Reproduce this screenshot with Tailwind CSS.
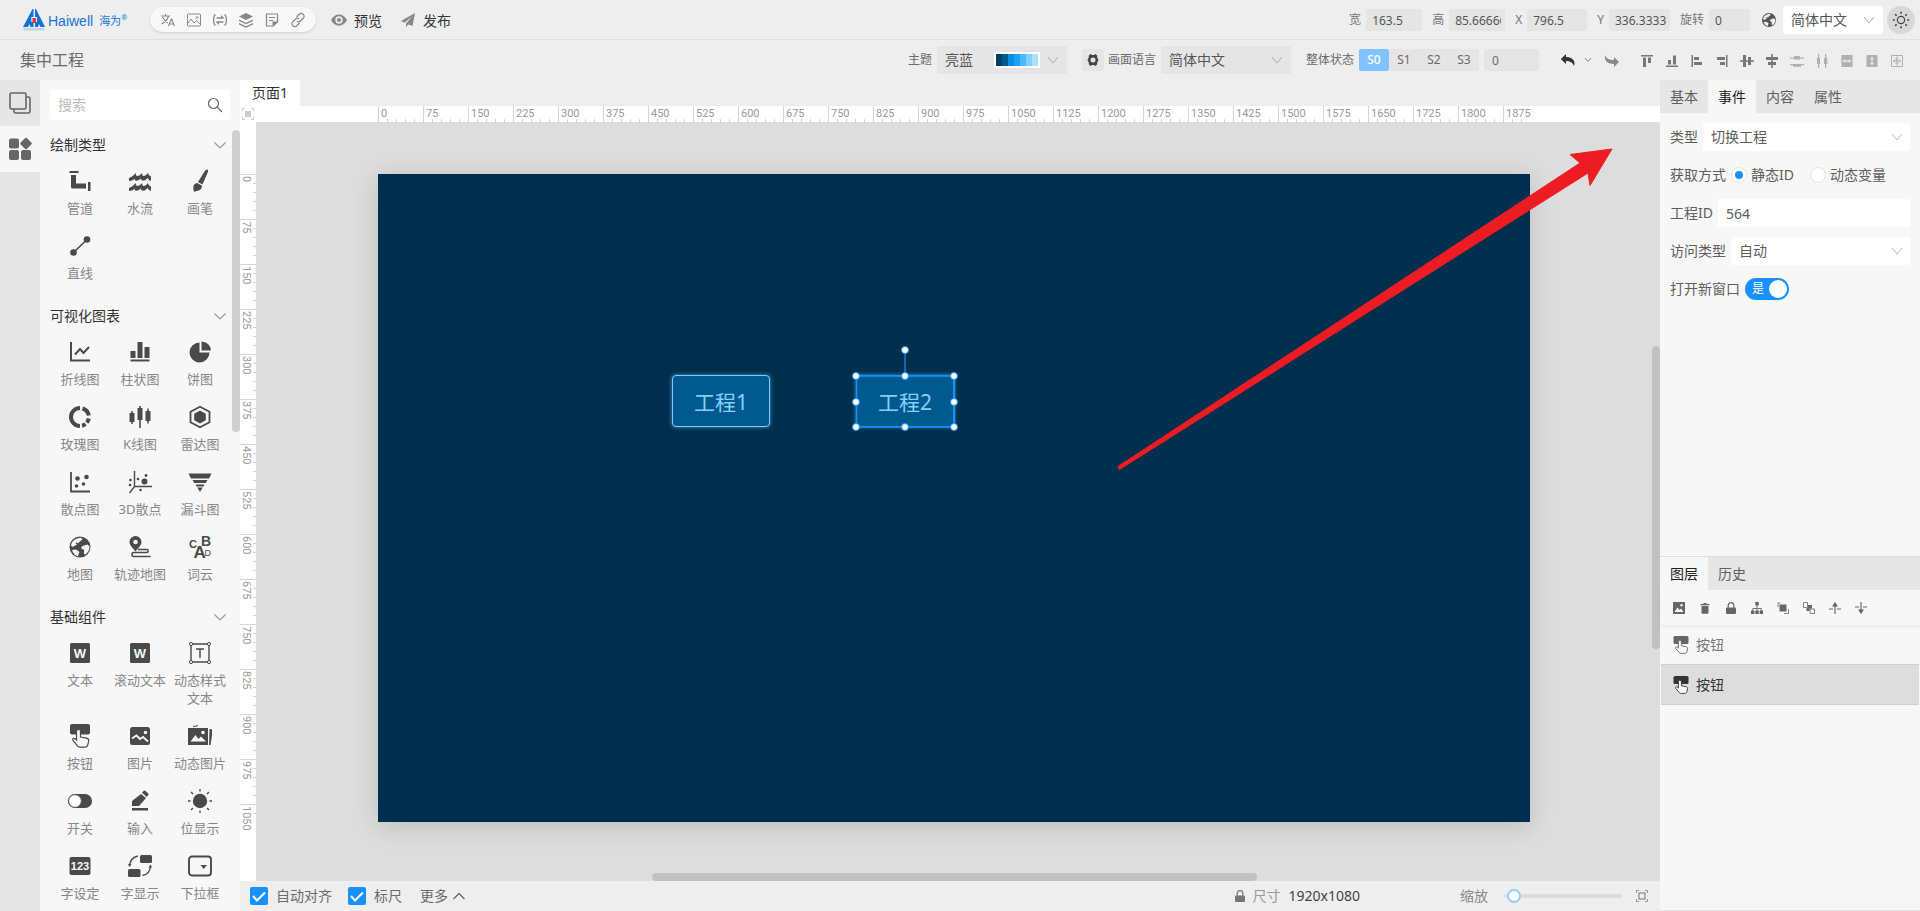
<!DOCTYPE html>
<html lang="zh-CN">
<head>
<meta charset="utf-8">
<title>集中工程 - Haiwell</title>
<script src="https://cdn.jsdelivr.net/npm/@tailwindcss/browser@4"></script>
</head>
<body class="flex h-screen flex-col overflow-hidden bg-[#eeeeee] font-['Noto_Sans','Noto_Sans_CJK_SC',sans-serif] text-sm text-[#5e5e5e]">

<!-- Icon library -->
<svg class="hidden" aria-hidden="true">
  <symbol id="chev" viewBox="0 0 12 12"><path d="M1 3l5 6 5-6" fill="none" stroke="currentColor"/></symbol>
  <symbol id="pipe" viewBox="0 0 24 24"><path fill="currentColor" d="M1.500 2h9v2h-9zM3 6h5v8.500h10v5H4.500A1.500 1.500 0 0 1 3 18zM20 13h2.500v9H20z"/></symbol>
  <symbol id="water" viewBox="0 0 24 24"><path fill="currentColor" d="M1 9C4 8 6 6 7.500 4c.5 2 .8 3 1.500 3 2 0 3.500-1 5-3 .3 2 .6 3 1.500 3 1.500 0 3-1 4.500-3 .5 2 1.500 3 3 3.500V12c-1.500-.5-2.500-1.500-3.500-3-1.500 2-3 3-5 2.500-1 0-1.500-1-1.700-2C11 11 9.500 12 8 11.700c-1-.2-1.300-1-1.500-2C5 11 3 12 1 12zM1 19c3-1 5-3 6.500-5 .5 2 .8 3 1.500 3 2 0 3.500-1 5-3 .3 2 .6 3 1.500 3 1.500 0 3-1 4.500-3 .5 2 1.500 3 3 3.500V22c-1.500-.5-2.500-1.500-3.500-3-1.500 2-3 3-5 2.500-1 0-1.500-1-1.700-2C11 21 9.500 22 8 21.700c-1-.2-1.300-1-1.500-2C5 21 3 22 1 22z"/></symbol>
  <symbol id="brush" viewBox="0 0 24 24"><path fill="currentColor" d="M20 .5c-1.500-.3-2.500.5-3.500 2L10 13l4.500 2.500L19.500 4c.6-1.500.8-2.600.5-3.500zM9.300 14c-2.600.3-4 2-4 4.500 0 2 .3 3.300 1 4.500 1-.8 2-1 3.500-1.300 2.500-.6 4-2 4.200-5z"/></symbol>
  <symbol id="line" viewBox="0 0 24 24"><path d="M5.500 18.500l13.500-13" stroke="currentColor" stroke-width="1.600"/><circle cx="5.500" cy="18.500" r="3.300" fill="currentColor"/><circle cx="19" cy="5.500" r="3.300" fill="currentColor"/></symbol>
  <symbol id="linechart" viewBox="0 0 24 24"><path d="M3 2v18.500h19" fill="none" stroke="currentColor" stroke-width="2"/><path d="M7 14.500L12 9l3.500 4L21 7" fill="none" stroke="currentColor" stroke-width="2"/></symbol>
  <symbol id="bars" viewBox="0 0 24 24"><path fill="currentColor" d="M2.500 11h5v7h-5zM9.500 2h5v16h-5zM16.500 7h5v11h-5zM2.500 19.500h19v2h-19z"/></symbol>
  <symbol id="pie" viewBox="0 0 24 24"><path fill="currentColor" d="M11.500 2.500v10h10A10 10 0 1 1 11.500 2.500zM13.500 1.500a9.500 9.500 0 0 1 9.500 9h-9.500z"/></symbol>
  <symbol id="rose" viewBox="0 0 24 24"><g fill="none" stroke="currentColor" stroke-width="4"><path d="M12 21a9 9 0 0 1 0-18"/><path d="M14.500 3.500a9 9 0 0 1 6.300 7"/><path d="M20.800 13.500a9 9 0 0 1-2 4"/><path d="M17.500 19a9 9 0 0 1-3.500 1.700"/></g></symbol>
  <symbol id="kline" viewBox="0 0 24 24"><path fill="currentColor" d="M1.500 8h1.700V6h1.600v2h1.700v9H4.800v2H3.200v-2H1.500zM9.500 3h1.700V1h1.600v2h1.700v12h-1.700v8h-1.600v-8H9.500zM17.500 6h1.700V3.500h1.600V6h1.700v10h-1.700v2.500h-1.600V16h-1.700z"/></symbol>
  <symbol id="radar" viewBox="0 0 24 24"><path d="M12 1.800l9.500 5v10.500l-9.500 5-9.500-5V6.800z" fill="none" stroke="currentColor" stroke-width="1.800"/><path d="M12 5.500l5.800 3.300v6.400L12 18.500l-5.800-3.300V8.800z" fill="currentColor"/></symbol>
  <symbol id="scatter" viewBox="0 0 24 24"><path d="M3 2v19.500h19" fill="none" stroke="currentColor" stroke-width="1.800"/><g fill="currentColor"><circle cx="9.500" cy="8.500" r="2.300"/><circle cx="18.500" cy="7" r="2.300"/><circle cx="8.500" cy="16" r="1.800"/><circle cx="15.500" cy="14" r="1.800"/></g></symbol>
  <symbol id="scatter3" viewBox="0 0 24 24"><path d="M6.500 1v15.500H24M6.500 16.500L1.500 23" fill="none" stroke="currentColor" stroke-width="1.400"/><g fill="currentColor"><circle cx="16.500" cy="11.500" r="3"/><circle cx="10" cy="9" r="1.300"/><circle cx="18" cy="5.500" r="1.400"/><circle cx="2.500" cy="10" r="1.300"/><circle cx="2" cy="15" r="1.300"/><circle cx="12.500" cy="20" r="1.300"/></g></symbol>
  <symbol id="funnel" viewBox="0 0 24 24"><path fill="currentColor" d="M.5 3.500h23l-2.500 5H3zM4.500 10h15l-1.700 3H6.200zM7.500 14.500h9l-1 2h-7zM9.300 17.500h5.400L12 22z"/></symbol>
  <symbol id="globe" viewBox="0 0 24 24"><path fill="currentColor" fill-rule="evenodd" d="M12 1.500a10.500 10.500 0 1 0 0 21 10.500 10.500 0 0 0 0-21zM10 3.200l3.300-.4 1 1.700-2 1.800-2.500 2-1.300-.8-1 1 1.500 1.200-2.500 1-1.500 1.300-2-1.500c.5-3.700 3.200-6.500 7-7.300zM16 10.500l3.500-1 2 2c.1 3.500-1.500 6.300-4.500 8.200l-1.200-1.700.5-3-3-1.500.3-2zM4 15l4-.5 3.500 2.500-1 2-.5 2.200C7.200 20.500 5 18.500 4 15z"/></symbol>
  <symbol id="track" viewBox="0 0 24 24"><path fill="currentColor" fill-rule="evenodd" d="M7.500 1A6 6 0 0 0 1.500 7c0 3.500 3.500 6 6 9.500 2.500-3.500 6-6 6-9.500a6 6 0 0 0-6-6zm0 3.700a2.300 2.300 0 1 1 0 4.600 2.300 2.300 0 0 1 0-4.600z"/><path d="M10 14.500h9c1.500 0 1.500 3 0 3H5.500c-2 0-2 4 0 4h17" fill="none" stroke="currentColor" stroke-width="1.500"/></symbol>
  <symbol id="words" viewBox="0 0 24 24"><g fill="currentColor" font-family="Liberation Sans" font-weight="bold"><text x="1" y="12.500" font-size="11">C</text><text x="13" y="11" font-size="14">B</text><text x="5.500" y="23" font-size="17">A</text><text x="16.500" y="20.500" font-size="9" font-weight="normal">D</text></g></symbol>
  <symbol id="word" viewBox="0 0 24 24"><rect x="2" y="2" width="20" height="20" rx="1.500" fill="currentColor"/><text x="12" y="16.500" font-size="13" text-anchor="middle" font-family="Liberation Sans" font-weight="bold" fill="#f7f7f7">W</text></symbol>
  <symbol id="num" viewBox="0 0 24 24"><rect x="1.500" y="3" width="21" height="18" rx="2" fill="currentColor"/><text x="12" y="16" font-size="11" text-anchor="middle" font-family="Liberation Sans" font-weight="bold" fill="#f7f7f7">123</text></symbol>
  <symbol id="tbox" viewBox="0 0 24 24"><g fill="none" stroke="currentColor" stroke-width="1.400"><path d="M3 3h18v18H3zM8 8h8M12 8v9" /></g><g fill="#f7f7f7" stroke="currentColor"><circle cx="3" cy="3" r="1.600"/><circle cx="21" cy="3" r="1.600"/><circle cx="3" cy="21" r="1.600"/><circle cx="21" cy="21" r="1.600"/></g></symbol>
  <symbol id="tap" viewBox="0 0 24 24"><rect x="2" y="0" width="20" height="10.500" rx="2" fill="currentColor"/><path d="M8.500 16V7.500a2 2 0 0 1 4 0V13l6 1.200c1.700.4 2.500 1.300 2.200 3l-1 4c-.4 1.300-1 2-2.500 2h-5c-1.500 0-2.500-.6-3.300-2L5 16.500c-1-1.800.8-2.800 2-1.800z" fill="#f7f7f7" stroke="currentColor" stroke-width="1.200"/></symbol>
  <symbol id="pic" viewBox="0 0 24 24"><rect x="2" y="3" width="20" height="18" rx="2.500" fill="currentColor"/><circle cx="17.500" cy="8.500" r="1.700" fill="#f7f7f7"/><path d="M4 14.500l4.500-3 3.500 3.500 3-2 5 4.500" fill="none" stroke="#f7f7f7" stroke-width="1.800"/></symbol>
  <symbol id="pics" viewBox="0 0 24 24"><path fill="currentColor" d="M0 4h20v17H0zM21.500 5l3.500.5L22.500 21H21z"/><path d="M5 2.500l5-.8" stroke="currentColor"/><circle cx="15" cy="8.500" r="1.800" fill="#f7f7f7"/><path d="M2.500 17.500l5-6.500 3 4 2.500-2.500 5 5z" fill="#f7f7f7"/></symbol>
  <symbol id="switch" viewBox="0 0 24 24"><rect x="0" y="5" width="24" height="14" rx="7" fill="currentColor"/><circle cx="7" cy="12" r="6.300" fill="#fff" stroke="currentColor" stroke-width=".7"/></symbol>
  <symbol id="pen" viewBox="0 0 24 24"><path fill="currentColor" d="M13 5l5 4-7 8H4v-5zM14 3.800L15.500 2c.7-.6 1.300-.6 2 0l2.500 2.200c.7.600.7 1.200.1 2L18.800 8zM4 19h16v2.500H4z"/></symbol>
  <symbol id="lamp" viewBox="0 0 24 24"><circle cx="12" cy="12" r="7.200" fill="currentColor"/><path stroke="currentColor" stroke-width="1.300" d="M12-.5v3M12 21.500v3M-.5 12h3M21.500 12h3M3 3l2 2M19 19l2 2M21 3l-2 2M5 19l-2 2"/></symbol>
  <symbol id="swap" viewBox="0 0 24 24"><rect x="12" y="1" width="12" height="8" rx="1.500" fill="currentColor"/><rect x="0" y="15" width="12.500" height="8" rx="1.500" fill="currentColor"/><path d="M10 2C5 3 2 6 1.500 12M14.500 21.500c5-.8 7.500-4 8-9" fill="none" stroke="currentColor" stroke-width="1.400"/><path d="M0 10h3.500l-2 3zM20.500 13.500l2-3 1.500 3z" fill="currentColor"/></symbol>
  <symbol id="drop" viewBox="0 0 24 24"><rect x="1" y="2.500" width="22" height="19" rx="3" fill="none" stroke="currentColor" stroke-width="1.900"/><path d="M12.500 11h6.500L15.700 15z" fill="currentColor"/></symbol>
  <symbol id="lock" viewBox="0 0 12 12"><path d="M3.200 6V3.500a2.800 2.800 0 0 1 5.600 0V6" fill="none" stroke="currentColor" stroke-width="1.200"/><rect x="1" y="5.500" width="10" height="6.500" rx="1" fill="currentColor"/></symbol>
  <symbol id="fit" viewBox="0 0 12 12"><path d="M0.500 3V.5H3M9 .5h2.500V3M11.500 9v2.500H9M3 11.500H.5V9" fill="none" stroke="currentColor"/><rect x="3" y="3" width="6" height="6" fill="none" stroke="currentColor" stroke-width="1.400"/></symbol>
</svg>

<!-- Main header -->
<header class="flex h-10 shrink-0 items-center border-b border-[#e0e0e0] pl-[22px] pr-[5px]">
  <a href="#" class="flex w-32 items-center text-[#1574d4]" aria-label="Haiwell 海为">
    <svg class="h-6 w-6" viewBox="0 0 24 24"><path fill="#0f74d8" d="M10.500 1h1v8H9.300v5h2.200v5H8.500l-1-3-1.500 3H1zM13 1h1l9 18h-4.500L17 16l-1 3h-3v-5h2V9h-2z"/><path fill="#e8333b" d="M10.500 10h3.500v5h-3.500z"/><path fill="#0f74d8" opacity=".2" d="M1 20h22l-1 2.500H2z"/></svg>
    <span class="ml-0.5 pt-0.5 font-['Liberation_Sans'] text-sm leading-5">Haiwell</span>
    <span class="ml-1.5 pt-0.5 text-[11px]">海为</span><span class="mb-1 text-[7px]">®</span>
  </a>
  <nav class="flex h-[25px] items-center gap-2.5 rounded-full bg-[#f8f8f8] px-2.5 text-[#888888] shadow-sm">
    <button class="h-4 w-4" aria-label="翻译"><svg viewBox="0 0 16 16"><path d="M1 4h9M5.500 2v2M8.500 4C7.500 8 4.500 10.500 1.500 12M2.500 5C4 8 6 10 8 11M8.500 14l2.800-7h.4l2.800 7M9.500 12h4" fill="none" stroke="currentColor" stroke-width="1.100"/></svg></button>
    <button class="h-4 w-4" aria-label="图片"><svg viewBox="0 0 16 16"><rect x="1.500" y="2" width="13" height="12" rx="1" fill="none" stroke="currentColor"/><path d="M2 11l3-4 3 4 2.500-2.500L14 12" fill="none" stroke="currentColor"/><circle cx="11" cy="5.500" r="1" fill="none" stroke="currentColor" stroke-width=".8"/></svg></button>
    <button class="h-4 w-4" aria-label="变量"><svg viewBox="0 0 16 16"><path d="M3.500 2.500C1 4 1 12 3.500 13.500M12.500 2.500C15 4 15 12 12.500 13.500M4.500 6h7M4.500 10h7" fill="none" stroke="currentColor" stroke-width="1.300"/><path fill="currentColor" d="M9 3L12 6H9zM7 13L4 10h3z"/></svg></button>
    <button class="h-4 w-4" aria-label="图层"><svg viewBox="0 0 16 16"><path fill="currentColor" d="M8 1l7 3.500L8 8 1 4.500zM1 7.500l7 3.300 7-3.300V9l-7 3.300L1 9zM1 11l7 3.200 7-3.200v1.500L8 15.700l-7-3.200z"/></svg></button>
    <button class="h-4 w-4" aria-label="记录"><svg viewBox="0 0 16 16"><path d="M2.500 2h11v8l-4 4h-7zM5 5.500h6M5 8.500h4" fill="none" stroke="currentColor" stroke-width="1.200"/><path fill="currentColor" d="M8.500 14.500V9.500h5.500z"/></svg></button>
    <button class="h-4 w-4" aria-label="链接"><svg viewBox="0 0 16 16"><g fill="none" stroke="currentColor" stroke-width="1.200"><path d="M6.500 5l3-3c2.500-2 6 1.500 4 4l-3 3c-1 1-2.500 1-3.500 0"/><path d="M9.500 11l-3 3c-2.500 2-6-1.500-4-4l3-3c1-1 2.500-1 3.500 0"/></g></svg></button>
  </nav>
  <button class="ml-[15px] flex items-center gap-[7px] text-[#333333]"><svg class="h-4 w-4 text-[#888888]" viewBox="0 0 16 16"><path fill="currentColor" fill-rule="evenodd" d="M0 8c3.500-7.500 12.500-7.500 16 0-3.500 7.500-12.500 7.500-16 0zm8-3.700a3.700 3.700 0 1 0 0 7.400 3.700 3.700 0 0 0 0-7.400z"/><circle cx="8" cy="8" r="2" fill="currentColor"/></svg><span class="pt-0.5">预览</span></button>
  <button class="ml-[18px] flex items-center gap-[7px] text-[#333333]"><svg class="h-4 w-4 text-[#888888]" viewBox="0 0 16 16"><path fill="currentColor" d="M15 1L1 9l3.500 1.700L12 4.500 6 11.500V15l2.200-2.500L12.500 14z"/></svg><span class="pt-0.5">发布</span></button>

  <form class="ml-auto flex items-center gap-2.5 pt-px text-xs text-[#777777]">
    <label class="flex items-center gap-[5px]">宽<input class="h-[22px] w-14 rounded-xs bg-[#e5e5e5] px-1.5 text-[#555555]" value="163.5"></label>
    <label class="flex items-center gap-[5px]">高<input class="h-[22px] w-14 rounded-xs bg-[#e5e5e5] pr-1 pl-1.5 text-[#555555]" value="85.66666"></label>
    <label class="flex items-center gap-[5px]">X<input class="h-[22px] w-[60px] rounded-xs bg-[#e5e5e5] px-1.5 text-[#555555]" value="796.5"></label>
    <label class="flex items-center gap-[5px]">Y<input class="h-[22px] w-[61px] rounded-xs bg-[#e5e5e5] pr-0.5 pl-1.5 text-[#555555]" value="336.3333"></label>
    <label class="flex items-center gap-[5px]">旋转<input class="h-[22px] w-[41px] rounded-xs bg-[#e5e5e5] px-1.5 text-[#555555]" value="0"></label>
  </form>
  <svg class="ml-[11px] h-4 w-4 text-[#555555]"><use href="#globe"/></svg>
  <div class="relative ml-1.5 w-[100px]">
    <select aria-label="语言" class="h-7 w-full appearance-none rounded-xs bg-white pl-2 text-sm text-[#555555]"><option>简体中文</option></select>
    <svg class="pointer-events-none absolute right-2 top-2 h-3 w-3 text-[#aaaaaa]"><use href="#chev"/></svg>
  </div>
  <button class="ml-1 flex h-7 w-7 items-center justify-center rounded-full bg-[#d8d8d8] text-[#444444]" aria-label="主题模式"><svg class="h-[18px] w-[18px]" viewBox="0 0 18 18"><g fill="none" stroke="currentColor" stroke-width="1.200"><circle cx="9" cy="9" r="3.600"/><path stroke-width="1.600" d="M9 .8v2M9 15.200v2M.8 9h2M15.200 9h2M3.200 3.200l1.400 1.400M13.400 13.400l1.400 1.400M14.800 3.200l-1.400 1.400M4.600 13.400l-1.400 1.400"/></g></svg></button>
</header>

<!-- Project toolbar -->
<div class="flex h-10 shrink-0 items-center pl-5 pr-4 text-xs text-[#6a6a6a]">
  <h1 class="text-base">集中工程</h1>
  <label for="theme" class="ml-auto">主题</label>
  <div class="relative ml-[5px] w-[130px]">
    <select id="theme" class="h-7 w-full appearance-none rounded-xs bg-[#e5e5e5] pl-2 text-sm text-[#555555]"><option>亮蓝</option></select>
    <span class="pointer-events-none absolute right-[27px] top-1.5 flex h-4 border-2 border-white">
      <i class="w-1.5 bg-[#003f6b]"></i><i class="w-1.5 bg-[#005a91]"></i><i class="w-1.5 bg-[#0a8fe0]"></i><i class="w-1.5 bg-[#1ba3f5]"></i><i class="w-1.5 bg-[#4cb7fa]"></i><i class="w-1.5 bg-[#80cfff]"></i><i class="w-1.5 bg-[#ade2ff]"></i>
    </span>
    <svg class="pointer-events-none absolute right-2 top-2 h-3 w-3 text-[#aaaaaa]"><use href="#chev"/></svg>
  </div>
  <button class="ml-[15px] flex h-[22px] w-[22px] items-center justify-center rounded-xs bg-[#e5e5e5] text-[#444444]" aria-label="语言设置"><svg class="h-3 w-3" viewBox="0 0 12 12"><path fill="currentColor" fill-rule="evenodd" d="M3.500 0l1.500 1h2l1.500-1 1.700 1.500v2l1.300 2.500-1.300 2.500v1.700L8.500 12 7 11H5l-1.500 1-1.700-1.800V8.500L.5 6l1.300-2.500v-2zM6 3.500a2.500 2.500 0 1 0 0 5 2.500 2.500 0 0 0 0-5z"/></svg></button>
  <label for="lang" class="ml-1">画面语言</label>
  <div class="relative ml-[5px] w-[130px]">
    <select id="lang" class="h-7 w-full appearance-none rounded-xs bg-[#e5e5e5] pl-2 text-sm text-[#555555]"><option>简体中文</option></select>
    <svg class="pointer-events-none absolute right-2 top-2 h-3 w-3 text-[#aaaaaa]"><use href="#chev"/></svg>
  </div>
  <label for="state" class="ml-[15px]">整体状态</label>
  <div class="ml-[5px] flex h-[22px] rounded-xs bg-[#e5e5e5]">
    <button class="w-[30px] rounded-xs bg-[#7fc2ff] font-medium text-white">S0</button>
    <button class="w-[30px]">S1</button>
    <button class="w-[30px]">S2</button>
    <button class="w-[30px]">S3</button>
  </div>
  <input id="state" class="ml-[5px] h-[22px] w-[55px] rounded-xs bg-[#e5e5e5] px-2" value="0">
  <button class="ml-[21px] h-4 w-4 text-[#333333]" aria-label="撤销"><svg viewBox="0 0 16 16"><path fill="currentColor" d="M6 2v3c5 0 8.500 2.500 8.500 6.500 0 1-.2 1.800-.6 2.500C13 10.800 10 9 6 9v3L.8 7z"/></svg></button>
  <button class="ml-2 h-2 w-2 text-[#888888]" aria-label="撤销历史"><svg viewBox="0 0 8 8"><path d="M1 2l3 3.500L7 2" fill="none" stroke="currentColor"/></svg></button>
  <button class="ml-3 h-4 w-4 text-[#888888]" aria-label="重做"><svg viewBox="0 0 16 16"><path fill="currentColor" d="M1 3c1.200 3.200 3.500 5 9 5V5l5 5-5 5v-3C4 12 0 9 1 3z"/></svg></button>
  <div class="ml-5 flex gap-[11px] pt-0.5 text-[#777777]">
    <button class="h-3.5 w-3.5" aria-label="顶对齐"><svg viewBox="0 0 14 14"><path fill="currentColor" d="M1 1h12v1.500H1zM3 3.500h3V13H3zM8 3.500h3V9H8z"/></svg></button>
    <button class="h-3.5 w-3.5" aria-label="底对齐"><svg viewBox="0 0 14 14"><path fill="currentColor" d="M1 11.500h12V13H1zM3 6h3v4.500H3zM8 1.500h3v9H8z"/></svg></button>
    <button class="h-3.5 w-3.5" aria-label="左对齐"><svg viewBox="0 0 14 14"><path fill="currentColor" d="M1.500 1H3v12H1.500zM4 3h5v3H4zM4 8h8v3H4z"/></svg></button>
    <button class="h-3.5 w-3.5" aria-label="右对齐"><svg viewBox="0 0 14 14"><path fill="currentColor" d="M11 1h1.500v12H11zM2 3h8v3H2zM5 8h5v3H5z"/></svg></button>
    <button class="h-3.5 w-3.5" aria-label="垂直居中"><svg viewBox="0 0 14 14"><path fill="currentColor" d="M0 6.200h14v1.600H0zM3 1h3v12H3zM8 3h3v8H8z"/></svg></button>
    <button class="h-3.5 w-3.5" aria-label="水平居中"><svg viewBox="0 0 14 14"><path fill="currentColor" d="M6.200 0h1.600v14H6.200zM1 3h12v3H1zM3 8h8v3H3z"/></svg></button>
    <button class="h-3.5 w-3.5 text-[#b0b0b0]" aria-label="垂直分布"><svg viewBox="0 0 14 14"><path fill="currentColor" d="M0 3.500h4V2h6v1.500h4v1.300h-4v.7H4v-.7H0zM0 10h14v1.300h-3v1.500H3v-1.500H0z"/></svg></button>
    <button class="h-3.5 w-3.5 text-[#b0b0b0]" aria-label="水平分布"><svg viewBox="0 0 14 14"><path fill="currentColor" d="M3 0h1.300v14H3zM2 4h3v6H2zM10 0h1.300v14H10zM9 4h3.300v6H9z"/></svg></button>
    <button class="h-3.5 w-3.5 text-[#b0b0b0]" aria-label="等宽"><svg viewBox="0 0 14 14"><path fill="currentColor" d="M1.500 1h11v12h-11z"/><path d="M3.500 7h7M5 5.500L3.500 7 5 8.500M9 5.500L10.500 7 9 8.500" fill="none" stroke="#fff"/></svg></button>
    <button class="h-3.5 w-3.5 text-[#b0b0b0]" aria-label="等高"><svg viewBox="0 0 14 14"><path fill="currentColor" d="M1.500 1h11v12h-11z"/><path d="M7 3.500v7M5.500 5L7 3.500 8.500 5M5.500 9L7 10.500 8.500 9" fill="none" stroke="#fff"/></svg></button>
    <button class="h-3.5 w-3.5 text-[#b0b0b0]" aria-label="等尺寸"><svg viewBox="0 0 14 14"><path d="M1.500 1.500h11v11h-11zM7 2.500v9M3 7h8M5.500 4L7 5.500 8.500 4M5.500 10L7 8.500 8.500 10M4 5.500L5 7 4 8.500M10 5.500L9 7l1 1.500" fill="none" stroke="currentColor"/></svg></button>
  </div>
</div>

<main class="flex min-h-0 flex-1">
  <!-- Side tabs -->
  <nav class="flex w-10 shrink-0 flex-col bg-[#e6e6e6] text-[#666666]">
    <button class="flex h-[46px] items-center justify-center" aria-label="页面"><svg class="h-6 w-6" viewBox="0 0 24 24"><g fill="none" stroke="currentColor" stroke-width="1.600"><rect x="2" y="2" width="16" height="16" rx="1.500"/><path d="M18 6h2.500a1.500 1.500 0 0 1 1.500 1.500v13a1.500 1.500 0 0 1-1.500 1.500h-13A1.500 1.500 0 0 1 6 20.500V18"/></g></svg></button>
    <button class="flex h-[46px] items-center justify-center bg-[#f7f7f7]" aria-label="组件"><svg class="h-6 w-6" viewBox="0 0 24 24"><g fill="currentColor"><rect x="1" y="1.500" width="10" height="10" rx="2"/><rect x="1" y="13" width="10" height="10" rx="2"/><rect x="13" y="13" width="10" height="10" rx="2"/><rect x="13.500" y="2" width="9" height="9" rx="1.500" transform="rotate(45 18 6.500)"/></g></svg></button>
  </nav>

  <!-- Component library -->
  <aside class="flex w-[200px] shrink-0 flex-col overflow-hidden bg-[#f7f7f7] pt-2.5">
    <label class="mx-2.5 flex h-[30px] shrink-0 items-center rounded-xs bg-white pr-[7px] pl-2">
      <input class="min-w-0 flex-1 placeholder-[#bbbbbb] outline-none" placeholder="搜索">
      <svg class="h-4 w-4 text-[#666666]" viewBox="0 0 16 16"><g fill="none" stroke="currentColor" stroke-width="1.200"><circle cx="6.500" cy="6.500" r="5"/><path d="M10.200 10.200L15 15"/></g></svg>
    </label>
    <div class="mt-[5px] flex min-h-0 flex-1">
      <div id="library" class="min-w-0 flex-1 overflow-hidden pl-2.5"></div>
      <div class="mt-[5px] h-[302px] w-2 shrink-0 rounded-full bg-[#cfcfcf]"></div>
    </div>
  </aside>

  <!-- Editor -->
  <section class="flex min-w-0 flex-1 flex-col">
    <div class="flex h-[26px] shrink-0"><button class="w-[60px] rounded-t-xs bg-white text-[#333333]">页面1</button></div>
    <div class="flex h-4 shrink-0 bg-white pr-2">
      <button class="flex w-4 items-center justify-center text-[#cccccc]" aria-label="适应画布"><svg class="h-3 w-3" viewBox="0 0 12 12"><path d="M.5 3V.5H3M9 .5h2.500V3M11.500 9v2.500H9M3 11.500H.5V9" fill="none" stroke="currentColor"/><path d="M3 3h6v6H3z" fill="currentColor"/></svg></button>
      <div class="flex min-w-0 flex-1 justify-center"><div id="hruler" class="flex w-[1152px] shrink-0 font-[Roboto,'Liberation_Sans',sans-serif] text-[11px] leading-[14px] text-[#999999]"></div></div>
    </div>
    <div class="flex min-h-0 flex-1 bg-[#dddddd]">
      <div class="w-4 shrink-0 overflow-hidden bg-white pt-[52px]"><div id="vruler" class="flex h-[648px] w-4 flex-col font-[Roboto,'Liberation_Sans',sans-serif] text-[11px] leading-[14px] text-[#999999]"></div></div>
      <div class="flex min-w-0 flex-1 flex-col">
        <div class="flex min-h-0 flex-1 justify-center pt-[52px]">
          <div class="relative h-[648px] w-[1152px] shrink-0 bg-[#002f4d] shadow-[0_4px_24px_rgba(0,0,0,0.15)]">
            <button class="absolute left-[294px] top-[201px] h-[52px] w-[98px] rounded-sm border border-[#7fcbfa] bg-[#005a8f] pt-0.5 text-[21px] text-[#84cffb] shadow-[0_0_4px_#3f97cc]">工程1</button>
            <button class="absolute left-[478px] top-[201px] h-[52px] w-[98px] border border-[#1890ff] bg-[#005a8f] pt-0.5 text-[21px] text-[#84cffb] shadow-[0_0_4px_#3f97cc]">工程2</button>
            <svg class="pointer-events-none absolute inset-0 h-full w-full overflow-visible" viewBox="0 0 1152 648">
              <path d="M527 176v26" stroke="#0a6bb5" stroke-width="2"/>
              <path d="M478.500 202h98v51h-98z" fill="none" stroke="#1094f5" stroke-width="1.500"/>
              <g fill="#fff" stroke="#1890ff"><circle cx="527" cy="176" r="3.500"/><circle cx="478" cy="202" r="3.500"/><circle cx="527" cy="202" r="3.500"/><circle cx="576" cy="202" r="3.500"/><circle cx="478" cy="228" r="3.500"/><circle cx="576" cy="228" r="3.500"/><circle cx="478" cy="253" r="3.500"/><circle cx="527" cy="253" r="3.500"/><circle cx="576" cy="253" r="3.500"/></g>
              <path d="M740 292.500L1202-11l-10-8.500 42-5.500-22 36.500-2-12.500L741.500 295.500z" fill="#ed1c24" stroke="#ed1c24" stroke-linejoin="round"/>
            </svg>
          </div>
        </div>
        <div class="relative h-2 shrink-0"><div class="absolute left-[396px] h-2 w-[605px] rounded-full bg-[#c1c1c1]"></div></div>
      </div>
      <div class="w-2 shrink-0 pt-56"><div class="h-[303px] w-2 rounded-full bg-[#c1c1c1]"></div></div>
    </div>
    <footer class="flex h-[30px] shrink-0 items-center bg-[#eeeeee] pl-2.5 pr-3 text-[#6a6a6a]">
      <label class="flex items-center gap-2"><span class="grid h-[18px] w-[18px]"><input type="checkbox" checked class="col-start-1 row-start-1 appearance-none rounded-xs bg-[#1890ff]"><svg class="pointer-events-none col-start-1 row-start-1" viewBox="0 0 18 18"><path d="M3 9l4 4.500 8-8" fill="none" stroke="#fff" stroke-width="2"/></svg></span>自动对齐</label>
      <label class="ml-4 flex items-center gap-2"><span class="grid h-[18px] w-[18px]"><input type="checkbox" checked class="col-start-1 row-start-1 appearance-none rounded-xs bg-[#1890ff]"><svg class="pointer-events-none col-start-1 row-start-1" viewBox="0 0 18 18"><path d="M3 9l4 4.500 8-8" fill="none" stroke="#fff" stroke-width="2"/></svg></span>标尺</label>
      <button class="ml-[18px] flex items-center gap-[5px]">更多<svg class="h-3 w-3" viewBox="0 0 12 12"><path d="M.5 9L6 3.500 11.500 9" fill="none" stroke="currentColor" stroke-width="1.300"/></svg></button>
      <svg class="ml-auto h-3 w-3 text-[#777777]"><use href="#lock"/></svg>
      <span class="ml-[7px] text-[#999999]">尺寸</span>
      <span class="ml-2 text-[#444444]">1920x1080</span>
      <label for="zoom" class="ml-[100px] text-[#888888]">缩放</label>
      <input id="zoom" type="range" min="0" max="100" value="3" class="ml-4 h-1 w-[118px] appearance-none rounded-full bg-[#dcdcdc] [&::-webkit-slider-thumb]:h-3.5 [&::-webkit-slider-thumb]:w-3.5 [&::-webkit-slider-thumb]:appearance-none [&::-webkit-slider-thumb]:rounded-full [&::-webkit-slider-thumb]:border-2 [&::-webkit-slider-thumb]:border-[#91d0ff] [&::-webkit-slider-thumb]:bg-white">
      <button class="ml-[14px] h-3 w-3 text-[#999999]" aria-label="适应窗口"><svg class="h-3 w-3"><use href="#fit"/></svg></button>
    </footer>
  </section>

  <!-- Properties and layers -->
  <aside class="flex w-[260px] shrink-0 flex-col border-b border-[#e0e0e0] bg-[#f7f7f7]">
    <nav class="flex h-[33px] shrink-0 bg-[#e6e6e6]">
      <button class="w-12">基本</button>
      <button class="w-12 bg-[#f7f7f7] text-[#222222]">事件</button>
      <button class="w-12">内容</button>
      <button class="w-12">属性</button>
    </nav>
    <form class="flex flex-1 flex-col gap-2.5 p-2.5">
      <div class="flex h-7 items-center gap-[5px]">
        <label for="type">类型</label>
        <div class="relative flex-1"><select id="type" class="h-7 w-full appearance-none rounded-xs bg-white pl-2"><option>切换工程</option></select><svg class="pointer-events-none absolute right-[7px] top-2 h-3 w-3 text-[#bbbbbb]"><use href="#chev"/></svg></div>
      </div>
      <div role="radiogroup" aria-labelledby="mode" class="flex h-7 items-center">
        <span id="mode">获取方式</span>
        <label class="ml-[5px] flex items-center gap-1"><input type="radio" name="mode" checked class="h-4 w-4 appearance-none rounded-full border-[4px] border-white bg-[#1890ff] outline outline-1 -outline-offset-1 outline-[#e3e3e3]">静态ID</label>
        <label class="ml-4 flex items-center gap-1"><input type="radio" name="mode" class="h-4 w-4 appearance-none rounded-full border border-[#e3e3e3] bg-white">动态变量</label>
      </div>
      <div class="flex h-7 items-center gap-[5px]">
        <label for="pid">工程ID</label>
        <input id="pid" class="h-7 min-w-0 flex-1 rounded-xs bg-white px-2" value="564">
      </div>
      <div class="flex h-7 items-center gap-[5px]">
        <label for="visit">访问类型</label>
        <div class="relative flex-1"><select id="visit" class="h-7 w-full appearance-none rounded-xs bg-white pl-2"><option>自动</option></select><svg class="pointer-events-none absolute right-[7px] top-2 h-3 w-3 text-[#bbbbbb]"><use href="#chev"/></svg></div>
      </div>
      <div class="flex h-7 items-center gap-[5px]">
        <span id="win">打开新窗口</span>
        <button type="button" role="switch" aria-checked="true" aria-labelledby="win" class="flex h-[22px] w-11 items-center justify-between rounded-full bg-[#1890ff] pl-[7px] pr-0.5 text-xs text-white">是<span class="h-[18px] w-[18px] rounded-full bg-white"></span></button>
      </div>
    </form>
    <section class="flex h-[354px] shrink-0 flex-col border-t border-[#e0e0e0]">
      <nav class="flex h-[33px] shrink-0 bg-[#e6e6e6]">
        <button class="w-12 bg-[#f7f7f7] text-[#222222]">图层</button>
        <button class="w-12">历史</button>
      </nav>
      <div class="flex h-[35px] shrink-0 items-center gap-3.5 px-[13px] text-[#666666] shadow-[0_2px_4px_rgba(0,0,0,0.06)]">
        <button class="h-3 w-3" aria-label="图片"><svg viewBox="0 0 12 12"><path fill="currentColor" fill-rule="evenodd" d="M0 0h12v12H0zM8.500 2a1.300 1.300 0 1 0 0 2.600 1.300 1.300 0 0 0 0-2.600zM1.500 10l3-4.500L6.500 8 8 6.500l2.500 3.500z"/></svg></button>
        <button class="h-3 w-3" aria-label="删除"><svg viewBox="0 0 12 12"><path fill="currentColor" d="M1.500 2h3V1h3v1h3v1.300h-9zM2.500 4h7v6.500c0 .8-.5 1.300-1.300 1.300H3.800c-.8 0-1.300-.5-1.300-1.300z"/></svg></button>
        <button class="h-3 w-3" aria-label="锁定"><svg class="h-3 w-3"><use href="#lock"/></svg></button>
        <button class="h-3 w-3" aria-label="组合"><svg viewBox="0 0 12 12"><path d="M6 3v6M1.800 9V6.500h8.400V9" fill="none" stroke="currentColor" stroke-width=".9"/><path fill="currentColor" d="M4.300 0h3.400v3.500H4.300zM0 8.500h3.400V12H0zM4.300 8.500h3.400V12H4.300zM8.600 8.500H12V12H8.600z"/></svg></button>
        <button class="h-3 w-3" aria-label="置于顶层"><svg viewBox="0 0 12 12"><path d="M3.500 1H1v4M11.500 7v4.500H7" fill="none" stroke="currentColor" stroke-width=".8"/><path fill="currentColor" d="M2.500 2.500h7v7h-7z"/></svg></button>
        <button class="h-3 w-3" aria-label="置于底层"><svg viewBox="0 0 12 12"><path d="M.5.5h4v5h-4zM7 7h4.500v4.500H7z" fill="none" stroke="currentColor" stroke-width=".8"/><path fill="currentColor" d="M5 3h4v3.500H6.500V9H3.500V6H5z"/></svg></button>
        <button class="h-3 w-3" aria-label="上移"><svg viewBox="0 0 12 12"><path d="M0 7h4M8 7h4M6 3v9" stroke="currentColor" stroke-width="1.200"/><path fill="currentColor" d="M6 0l3 4.500H3z"/></svg></button>
        <button class="h-3 w-3" aria-label="下移"><svg viewBox="0 0 12 12"><path d="M0 5h4M8 5h4M6 0v9" stroke="currentColor" stroke-width="1.200"/><path fill="currentColor" d="M6 12L3 7.500h6z"/></svg></button>
      </div>
      <ul class="mx-px">
        <li><button class="flex h-[39px] w-full items-center gap-1.5 pl-[11px] text-[#777777]"><svg class="h-[18px] w-[18px] text-[#666666]"><use href="#tap"/></svg>按钮</button></li>
        <li><button class="flex h-[41px] w-full items-center gap-1.5 border-y border-[#cfcfcf] bg-[#dddddd] pl-[11px] text-[#333333]"><svg class="h-[18px] w-[18px]"><use href="#tap"/></svg>按钮</button></li>
      </ul>
    </section>
  </aside>
</main>

<script>
  const groups = [
    ['绘制类型', [['pipe','管道'],['water','水流'],['brush','画笔'],['line','直线']]],
    ['可视化图表', [['linechart','折线图'],['bars','柱状图'],['pie','饼图'],['rose','玫瑰图'],['kline','K线图'],['radar','雷达图'],['scatter','散点图'],['scatter3','3D散点'],['funnel','漏斗图'],['globe','地图'],['track','轨迹地图'],['words','词云']]],
    ['基础组件', [['word','文本'],['word','滚动文本'],['tbox','动态样式文本'],['tap','按钮'],['pic','图片'],['pics','动态图片'],['switch','开关'],['pen','输入'],['lamp','位显示'],['num','字设定'],['swap','字显示'],['drop','下拉框']]]
  ];
  document.getElementById('library').innerHTML = groups.map(([title, items]) =>
    `<button class="flex h-10 w-full items-center justify-between pr-1.5 text-[#333333]">${title}<svg class="h-3 w-3 text-[#999999]" viewBox="0 0 12 12"><path d="M.5 3.500L6 9l5.500-5.500" fill="none" stroke="currentColor" stroke-width="1.200"/></svg></button>
     <div class="grid grid-cols-[repeat(3,60px)] pb-px">${items.map(([icon, name]) =>
      `<button class="flex flex-col items-center px-1 pt-1 pb-[13px] text-[13px] leading-[18px] text-[#888888]"><svg class="mb-1.5 h-6 w-6 shrink-0 overflow-visible text-[#4a4a4a]"><use href="#${icon}"/></svg><span class="-mx-1">${name}</span></button>`).join('')}</div>`).join('');

  const count = (n, f) => Array.from({ length: n }, (_, i) => f(i)).join('');
  document.getElementById('hruler').innerHTML = count(26, i =>
    `<div class="flex ${i < 25 ? 'w-[45px]' : 'w-[27px]'} relative shrink-0 items-end border-l border-[#d5d5d5]"><span class="absolute top-px left-[2px]">${i * 75}</span><div class="flex w-full gap-2 overflow-hidden pl-2">${count(i < 25 ? 4 : 2, () => '<i class="h-[3px] w-px shrink-0 bg-[#d5d5d5]"></i>')}</div></div>`);
  document.getElementById('vruler').innerHTML = count(15, i =>
    `<div class="flex ${i < 14 ? 'h-[45px]' : 'h-[18px]'} relative shrink-0 justify-end border-t border-[#d5d5d5]"><span class="absolute top-px -left-px [writing-mode:vertical-rl]">${i * 75}</span><div class="flex flex-col gap-2 pt-2">${count(i < 14 ? 4 : 1, () => '<i class="h-px w-[3px] shrink-0 bg-[#d5d5d5]"></i>')}</div></div>`);
</script>
</body>
</html>
